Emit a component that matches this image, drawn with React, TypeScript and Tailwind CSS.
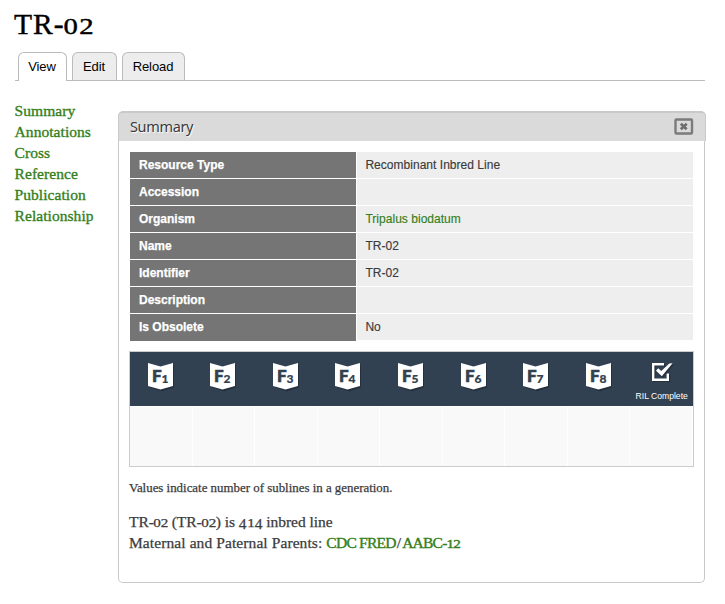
import React from "react";

const serif = "font-['Georgia','Liberation_Serif',serif]";
const sans = "font-['Liberation_Sans',sans-serif]";

function Digits({ low, tall }: { low?: string; tall?: string }) {
  return (
    <>
      {tall && <span className="relative top-[0.1em]">{tall}</span>}
      {low && <span className="mx-[0.1em] inline-block origin-bottom text-[0.76em] [transform:scaleX(1.28)]">{low}</span>}
    </>
  );
}

const nav = ["Summary", "Annotations", "Cross", "Reference", "Publication", "Relationship"];

const rows = [
  { label: "Resource Type", value: "Recombinant Inbred Line" },
  { label: "Accession", value: "" },
  { label: "Organism", value: "Tripalus biodatum", link: true },
  { label: "Name", value: "TR-02" },
  { label: "Identifier", value: "TR-02" },
  { label: "Description", value: "" },
  { label: "Is Obsolete", value: "No" },
];

function Badge({ n }: { n: number }) {
  return (
    <svg width="29" height="30" viewBox="0 0 29 30" className="mt-[10px] ml-[3px] shrink-0">
      <path d="M3 2.5 L15 5.8 L27 2.5 V25.5 L15 29.2 L3 25.5Z" fill="#25303d" />
      <path d="M1 1 L13.5 4.5 L26 1 V24 L13.5 27.5 L1 24Z" fill="#fff" />
      <text x="4.9" y="20.4" fill="#33414f" stroke="#33414f" strokeWidth="0.6" fontFamily="Lato" fontWeight="900" fontSize="17">F</text>
      <text x="14.4" y="21" fill="#33414f" stroke="#33414f" strokeWidth="0.2" fontFamily="Lato" fontWeight="900" fontSize="12">{n}</text>
    </svg>
  );
}

export default function App() {
  return (
    <div className="h-[604px] w-[725px] overflow-hidden bg-white pl-[14px] text-[#3b3b3b]">
      <h1 className={`${serif} h-[52px] pt-[7px] text-[29.5px] leading-[34px] tracking-[1px] text-black [-webkit-text-stroke:0.4px]`}>
        TR-<Digits low="02" />
      </h1>
      <div className={`${sans} ml-[1px] flex h-[29px] w-[690px] gap-[5px] border-b border-[#bbb] pl-[3px] text-[13px] leading-[28px] tracking-[-0.1px] text-black`}>
        <div className="h-[29px] w-[49px] rounded-t-[6px] border border-b-0 border-[#bbb] bg-white pr-px text-center">View</div>
        <div className="w-[45px] rounded-t-[6px] border border-b-0 border-[#bbb] bg-[#ededed] pr-px text-center">Edit</div>
        <div className="w-[63px] rounded-t-[6px] border border-b-0 border-[#bbb] bg-[#ededed] pr-px text-center">Reload</div>
      </div>
      <div className="flex">
        <nav className={`${serif} w-[104px] pt-[19px] pl-[0.6px] text-[15.5px] leading-[21px] tracking-[0.05px] text-[#347f1a] [-webkit-text-stroke:0.35px]`}>
          {nav.map((n) => (
            <div key={n}>{n}</div>
          ))}
        </nav>
        <section className="mt-[30px] h-[472px] w-[588px]">
          <header className="flex h-[30px] w-[588px] items-center justify-between rounded-t-[5px] border border-b-0 border-t-2 border-[#c9c9c9] bg-[#dadada] pr-[11px] pl-[11px]">
            <span className="-mt-[2px] font-['Noto_Sans',sans-serif] text-[14.5px] leading-[20px] tracking-[-0.35px] [text-shadow:1px_1px_1px_#fff]">Summary</span>
            <svg width="20" height="17" viewBox="0 0 20 17" className="-mt-[2px]">
              <rect x="1.5" y="1.5" width="16.5" height="14" rx="1" fill="#dadada" stroke="#7b7b7b" strokeWidth="2.4" />
              <path d="M6.8 5.8 L12.7 11.2 M12.7 5.8 L6.8 11.2" stroke="#6f6f6f" strokeWidth="2.8" />
            </svg>
          </header>
          <div className="h-[442px] w-[587px] rounded-b-[5px] border border-t-0 border-[#c9c9c9] px-[10px] pt-[11px]">
            <div className={`${sans} ml-[1px] flex w-[563px] flex-col gap-px text-[12px] leading-[26px]`}>
              {rows.map((r) => (
                <div key={r.label} className="flex h-[26px] gap-px">
                  <div className="w-[226px] bg-[#757575] pl-[9px] font-bold text-white [-webkit-text-stroke:0.25px]">{r.label}</div>
                  <div className={`w-[336px] bg-[#eee] pl-[8.4px] tracking-[0.03px] [-webkit-text-stroke:0.15px] ${r.link ? "text-[#347f1a]" : ""}`}>{r.value}</div>
                </div>
              ))}
              <div className="-mt-px h-px w-[226px] bg-[#757575]" />
            </div>
            <div className="mt-[10px] h-[116px] w-[565px] border border-[#ccc]">
              <div className="grid h-[54px] grid-cols-9 bg-[#314151]">
                {[1, 2, 3, 4, 5, 6, 7, 8].map((n) => (
                  <div key={n} className="flex justify-center pr-[3px]"><Badge n={n} /></div>
                ))}
                <div className={`${sans} flex flex-col items-center text-white`}>
                  <svg width="26" height="24" viewBox="0 0 26 24" className="mt-[8px]">
                    <path d="M16 5.2 H5.2 V20.8 H19.8 V14.5" fill="none" stroke="#25303d" strokeWidth="2.6" />
                    <path d="M15 4.2 H4.2 V19.8 H18.8 V13.5" fill="none" stroke="#fff" strokeWidth="2.4" />
                    <path d="M7 11.5 L10 9 L13 12 L21.5 4 L25 4.5 L13.5 18 Z" fill="#25303d" />
                    <path d="M7 10.7 L9.2 8.2 L12.3 11 L20.3 3.6 L23.6 3.2 L12.8 16.2 Z" fill="#fff" />
                  </svg>
                  <span className="mt-[7px] whitespace-nowrap text-[8.6px] leading-[10px]">RIL Complete</span>
                </div>
              </div>
              <div className="mt-px grid h-[59px] grid-cols-9">
                {[1, 2, 3, 4, 5, 6, 7, 8, 9].map((n) => (
                  <div key={n} className="border-r border-white bg-[#f9f9f9]" />
                ))}
              </div>
            </div>
            <div className={`${serif} [-webkit-text-stroke:0.25px]`}>
              <p className="pt-[12px] text-[12.9px] leading-[18px]">Values indicate number of sublines in a generation.</p>
              <p className="h-[35px] pt-[14px] text-[15.5px] leading-[21px] tracking-[-0.04px]">
                TR-<Digits low="02" /> (TR-<Digits low="02" />) is <Digits tall="4" /><Digits low="1" /><Digits tall="4" /> inbred line
              </p>
              <p className="h-[21px] text-[15.5px] leading-[21px] tracking-[0.09px]">
                Maternal and Paternal Parents: <span className="tracking-[-0.75px] text-[#347f1a] [-webkit-text-stroke:0.4px]">CDC FRED</span><span className="px-px">/</span><span className="tracking-[-0.75px] text-[#347f1a] [-webkit-text-stroke:0.4px]">AABC-<Digits low="12" /></span>
              </p>
            </div>
          </div>
        </section>
      </div>
    </div>
  );
}
